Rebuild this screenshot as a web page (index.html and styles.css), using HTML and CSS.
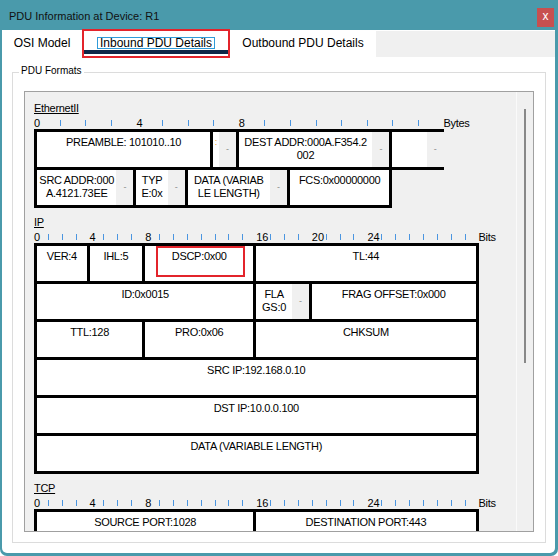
FILE: index.html
```html
<!DOCTYPE html>
<html lang="en">
<head>
    <meta charset="UTF-8">
    <title>PDU Information at Device: R1</title>
    <link rel="stylesheet" href="styles.css">
</head>
<body>

    <div class="window">
        <div class="titlebar">
            <div class="title">PDU Information at Device: R1</div>
            <div class="close">x</div>
        </div>

        <div class="body">
            <!-- Tabs -->
            <div class="tabs">
                <div class="tab tab-osi">OSI Model</div>
                <div class="tab tab-in active">
                    <span class="focus">Inbound PDU Details</span>
                    <span class="tab-mark"></span>
                </div>
                <div class="tab tab-out">Outbound PDU Details</div>
                <div class="tab-fill"></div>
            </div>

            <div class="group">
                <span class="group-title">PDU Formats</span>

                <div class="panel">
                    <div class="scroll">

                        <!-- Ethernet II -->
                        <div class="sec">
                            <div class="sec-name">EthernetII</div>
                            <div class="ruler bytes">
                                <span class="n">0</span><span class="k"></span><span class="k"></span><span class="k"></span>
                                <span class="n">4</span><span class="k"></span><span class="k"></span><span class="k"></span>
                                <span class="n">8</span><span class="k"></span><span class="k"></span><span class="k"></span><span class="k"></span><span class="k"></span><span class="k"></span><span class="k"></span>
                                <span class="unit">Bytes</span>
                            </div>
                            <div class="pdu bytes">
                                <div class="f first w7"><div class="t">PREAMBLE: 101010..10</div></div>
                                <div class="f w1"><div class="t cut">:</div><div class="g">-</div></div>
                                <div class="f w6"><div class="t">DEST ADDR:000A.F354.2<br>002</div><div class="g">-</div></div>
                                <div class="f open w2"><div class="t"></div><div class="g">-</div></div>

                                <div class="f first w4"><div class="t">SRC ADDR:000<br>A.4121.73EE</div><div class="g">-</div></div>
                                <div class="f w2"><div class="t">TYP<br>E:0x</div><div class="g">-</div></div>
                                <div class="f w4"><div class="t">DATA (VARIAB<br>LE LENGTH)</div><div class="g">-</div></div>
                                <div class="f w4"><div class="t">FCS:0x00000000</div></div>
                            </div>
                        </div>

                        <!-- IP -->
                        <div class="sec">
                            <div class="sec-name">IP</div>
                            <div class="ruler bits">
                                <span class="n">0</span><span class="k"></span><span class="k"></span><span class="k"></span>
                                <span class="n">4</span><span class="k"></span><span class="k"></span><span class="k"></span>
                                <span class="n">8</span><span class="k"></span><span class="k"></span><span class="k"></span><span class="k"></span><span class="k"></span><span class="k"></span><span class="k"></span>
                                <span class="n">16</span><span class="k"></span><span class="k"></span><span class="k"></span>
                                <span class="n">20</span><span class="k"></span><span class="k"></span><span class="k"></span>
                                <span class="n">24</span><span class="k"></span><span class="k"></span><span class="k"></span><span class="k"></span><span class="k"></span><span class="k"></span><span class="k"></span>
                                <span class="unit">Bits</span>
                            </div>
                            <div class="pdu bits">
                                <div class="f first w4"><div class="t">VER:4</div></div>
                                <div class="f w4"><div class="t">IHL:5</div></div>
                                <div class="f w8 dscp"><div class="t">DSCP:0x00</div><span class="hl"></span></div>
                                <div class="f w16"><div class="t">TL:44</div></div>

                                <div class="f first w16"><div class="t">ID:0x0015</div></div>
                                <div class="f w4"><div class="t">FLA<br>GS:0</div><div class="g">-</div></div>
                                <div class="f w12"><div class="t">FRAG OFFSET:0x000</div></div>

                                <div class="f first w8"><div class="t">TTL:128</div></div>
                                <div class="f w8"><div class="t">PRO:0x06</div></div>
                                <div class="f w16"><div class="t">CHKSUM</div></div>

                                <div class="f first w32"><div class="t">SRC IP:192.168.0.10</div></div>
                                <div class="f first w32"><div class="t">DST IP:10.0.0.100</div></div>
                                <div class="f first w32"><div class="t">DATA (VARIABLE LENGTH)</div></div>
                            </div>
                        </div>

                        <!-- TCP -->
                        <div class="sec">
                            <div class="sec-name">TCP</div>
                            <div class="ruler bits">
                                <span class="n">0</span><span class="k"></span><span class="k"></span><span class="k"></span>
                                <span class="n">4</span><span class="k"></span><span class="k"></span><span class="k"></span>
                                <span class="n">8</span><span class="k"></span><span class="k"></span><span class="k"></span><span class="k"></span><span class="k"></span><span class="k"></span><span class="k"></span>
                                <span class="n">16</span><span class="k"></span><span class="k"></span><span class="k"></span><span class="k"></span><span class="k"></span><span class="k"></span><span class="k"></span>
                                <span class="n">24</span><span class="k"></span><span class="k"></span><span class="k"></span><span class="k"></span><span class="k"></span><span class="k"></span><span class="k"></span>
                                <span class="unit">Bits</span>
                            </div>
                            <div class="pdu bits">
                                <div class="f first w16"><div class="t">SOURCE PORT:1028</div></div>
                                <div class="f w16"><div class="t">DESTINATION PORT:443</div></div>
                            </div>
                        </div>

                    </div>
                    <div class="scrollbar"><div class="thumb"></div></div>
                </div>
            </div>
        </div>
    </div>

</body>
</html>
```

FILE: styles.css
```css
* {
    box-sizing: border-box;
}

body {
    margin: 0;
    font-family: "Liberation Sans", Arial, sans-serif;
    color: #000;
}

/* Window frame */
.window {
    width: 558px;
    height: 556px;
    background: #4a9aab;
    border-radius: 0 0 7px 7px;
    display: flex;
    flex-direction: column;
}

.titlebar {
    height: 30px;
    display: flex;
    justify-content: space-between;
    padding-left: 9px;
}

.title {
    font-size: 11px;
    line-height: 14px;
    padding-top: 9px;
    color: #111;
}

.close {
    width: 17px;
    height: 19px;
    margin: 8px 4px 0 0;
    background: #c75050;
    color: #fff;
    font-size: 12px;
    line-height: 17px;
    text-align: center;
}

.body {
    flex: 1;
    margin: 0 3px 3px 2px;
    background: #fff;
    border-radius: 0 0 5px 5px;
    display: flex;
    flex-direction: column;
    min-height: 0;
}

/* Tabs */
.tabs {
    display: flex;
    height: 28px;
    font-size: 12px;
}

.tab {
    display: flex;
    flex-direction: column;
    align-items: center;
    padding-top: 7px;
    line-height: 13px;
    position: relative;
}

.tab-osi { width: 80px; }
.tab-in { width: 148px; }
.tab-out { width: 146px; }

.tab.active::after {
    content: '';
    align-self: stretch;
    height: 4px;
    margin: auto 2px 4px;
    background: #0f2747;
}

.focus {
    border: 1px solid #2f9bd9;
    padding: 0 2px;
    line-height: 10px;
}

/* red annotation round the tab */
.tab-mark {
    position: absolute;
    top: -1px;
    left: 0;
    right: 0;
    bottom: 0;
    border: 2px solid #e3242b;
}

.tab-fill {
    flex: 1;
    background: #f0f0f0;
    margin: 1px 0 1px;
}

/* Group box */
.group {
    flex: 1;
    position: relative;
    display: flex;
    margin: 14px 9px 10px 10px;
    padding: 18px 11px 10px 11px;
    border: 1px solid #dcdcdc;
    min-height: 0;
}

.group-title {
    position: absolute;
    top: -8px;
    left: 6px;
    padding: 0 2px;
    background: #fff;
    font-size: 10px;
    line-height: 12px;
}

.panel {
    flex: 1;
    display: flex;
    border: 1px solid #a0a0a0;
    background: #f0f0f0;
    min-height: 0;
}

.scroll {
    flex: 1;
    overflow: hidden;
    padding: 10px 0 0 9px;
}

.scrollbar {
    width: 17px;
    flex: none;
    border-left: 1px solid #fafafa;
    padding: 17px 0 0 7px;
}

.thumb {
    width: 2px;
    height: 254px;
    background: #888;
}

/* PDU sections */
.sec + .sec {
    margin-top: 8px;
}

.sec-name {
    font-size: 11px;
    line-height: 13px;
    letter-spacing: -0.3px;
    text-decoration: underline;
}

.ruler {
    display: flex;
    align-items: flex-start;
    height: 12px;
    margin-top: 2px;
    font-size: 11px;
    line-height: 12px;
}

.ruler > span {
    flex: none;
    white-space: nowrap;
}

.ruler.bytes > .n,
.ruler.bytes > .k {
    width: 25.6px;
}

.ruler.bits > .n,
.ruler.bits > .k {
    width: 13.9px;
}

.ruler .k {
    height: 6px;
    margin-top: 3px;
    border-left: 1px solid #4a95e0;
}

.unit {
    letter-spacing: -0.3px;
}

/* Field tables */
.pdu {
    display: grid;
    grid-auto-rows: 38px;
    width: max-content;
    border-top: 3px solid #000;
    font-size: 11px;
    line-height: 13px;
    letter-spacing: -0.3px;
}

.pdu.bytes {
    grid-template-columns: repeat(16, 25.6px);
}

.pdu.bits {
    grid-template-columns: repeat(32, 13.9px);
}

.w1 { grid-column: span 1; }
.w2 { grid-column: span 2; }
.w4 { grid-column: span 4; }
.w6 { grid-column: span 6; }
.w7 { grid-column: span 7; }
.w8 { grid-column: span 8; }
.w12 { grid-column: span 12; }
.w16 { grid-column: span 16; }
.w32 { grid-column: span 32; }

.f {
    display: flex;
    min-width: 0;
    overflow: hidden;
    background: #fff;
    border-right: 3px solid #000;
    border-bottom: 3px solid #000;
}

.f.first {
    border-left: 3px solid #000;
}

.f.open {
    border-right: 0;
}

.f .t {
    flex: 1;
    min-width: 0;
    padding-top: 4px;
    text-align: center;
    white-space: nowrap;
}

.f .t.cut {
    overflow: hidden;
    color: #f09a2a;
    font-size: 9px;
}

/* grey stub with the dash */
.f .g {
    flex: none;
    width: 17px;
    display: flex;
    align-items: center;
    justify-content: center;
    background: #f0f0f0;
    color: #8c8c8c;
    font-size: 9px;
}

.dscp {
    position: relative;
}

.hl {
    position: absolute;
    top: 0;
    left: 11px;
    width: 89px;
    height: 31px;
    border: 2px solid #e3242b;
}
```
